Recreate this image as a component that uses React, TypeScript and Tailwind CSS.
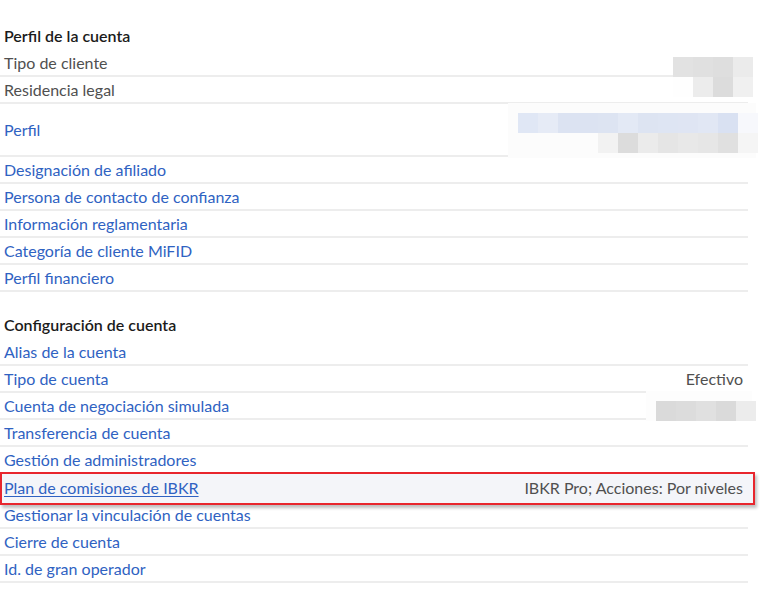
import React from "react";

type Row = {
  label: string;
  link?: boolean;
  value?: string;
  tall?: boolean;
};

const profileRows: Row[] = [
  { label: "Tipo de cliente" },
  { label: "Residencia legal" },
  { label: "Perfil", link: true, tall: true },
  { label: "Designación de afiliado", link: true },
  { label: "Persona de contacto de confianza", link: true },
  { label: "Información reglamentaria", link: true },
  { label: "Categoría de cliente MiFID", link: true },
  { label: "Perfil financiero", link: true },
];

const configRows: Row[] = [
  { label: "Alias de la cuenta", link: true },
  { label: "Tipo de cuenta", link: true, value: "Efectivo" },
  { label: "Cuenta de negociación simulada", link: true },
  { label: "Transferencia de cuenta", link: true },
  { label: "Gestión de administradores", link: true },
];

const configRowsAfter: Row[] = [
  { label: "Gestionar la vinculación de cuentas", link: true },
  { label: "Cierre de cuenta", link: true },
  { label: "Id. de gran operador", link: true },
];

// pixelated blocks that hide private values
const Blur = ({ colors, className }: { colors: string[][]; className: string }) => (
  <div className={"absolute flex flex-col " + className}>
    {colors.map((line, i) => (
      <div key={i} className="flex">
        {line.map((c, j) => (
          <div key={j} className="h-[20px] w-[20px]" style={{ background: c }} />
        ))}
      </div>
    ))}
  </div>
);

const ListRow = ({ row }: { row: Row }) => (
  <div
    className={
      "flex items-center justify-between border-b-2 border-[#ededed] pl-[4px] pr-[5px] " +
      (row.tall ? "h-[53px]" : "h-[27px]")
    }
  >
    <span className={row.link ? "text-[#2f62c2]" : "text-[#505050]"}>{row.label}</span>
    {row.value && <span className="text-[#505050]">{row.value}</span>}
  </div>
);

const Heading = ({ children, className }: { children: React.ReactNode; className?: string }) => (
  <div className={"flex h-[29px] items-center pl-[4px] font-semibold text-[#1b1b1b] " + (className ?? "")}>
    {children}
  </div>
);

export default function App() {
  return (
    <div
      className="relative h-[590px] w-[783px] overflow-hidden bg-white text-[16px]"
      style={{ fontFamily: "Lato, 'Open Sans', sans-serif" }}
    >
      <div className="w-[748px] pt-[21px]">
        <Heading>Perfil de la cuenta</Heading>
        {profileRows.map((r) => (
          <ListRow key={r.label} row={r} />
        ))}

        <Heading className="mt-[18px]">Configuración de cuenta</Heading>
        {configRows.map((r) => (
          <ListRow key={r.label} row={r} />
        ))}

        <div className="relative flex h-[28px] items-center justify-between pl-[4px] pr-[5px]">
          <div className="absolute -top-[2px] -bottom-[3px] left-0 -right-[7px] border-2 border-[#e8262d] bg-[#f4f5f9] shadow-[2px_3px_3px_rgba(0,0,0,0.25)]" />
          <span className="relative text-[#2f62c2] underline underline-offset-2">Plan de comisiones de IBKR</span>
          <span className="relative text-[#505050]">IBKR Pro; Acciones: Por niveles</span>
        </div>

        {configRowsAfter.map((r) => (
          <ListRow key={r.label} row={r} />
        ))}
      </div>

      <Blur
        className="left-[673px] top-[57px]"
        colors={[
          ["#e2e2e2", "#e0e0e0", "#dedede", "#ebebeb"],
          ["#fefefe", "#ececec", "#dcdcdc", "#f0f0f0"],
        ]}
      />
      <div className="absolute left-[508px] top-[103px] h-[55px] w-[248px] bg-[#fcfcfc]" />
      <Blur
        className="left-[518px] top-[113px]"
        colors={[
          ["#e0e7f5", "#e6ebf6", "#dce3f2", "#dce3f2", "#dde4f2", "#e3e9f5", "#dde4f2", "#dee5f3", "#dfe5f3", "#e1e7f4", "#d9e1f2", "#f7f8fc"],
        ]}
      />
      <Blur
        className="left-[598px] top-[133px]"
        colors={[["#f2f2f2", "#dcdcdc", "#ebebeb", "#e5e5e5", "#e8e8e8", "#e6e6e6", "#e0e0e0", "#f5f5f5"]]}
      />
      <div className="absolute left-[646px] top-[391px] h-[30px] w-[106px] bg-[#fdfdfd]" />
      <Blur
        className="left-[656px] top-[401px]"
        colors={[["#dadada", "#dcdcdc", "#e0e0e0", "#dadada", "#ececec"]]}
      />
    </div>
  );
}
